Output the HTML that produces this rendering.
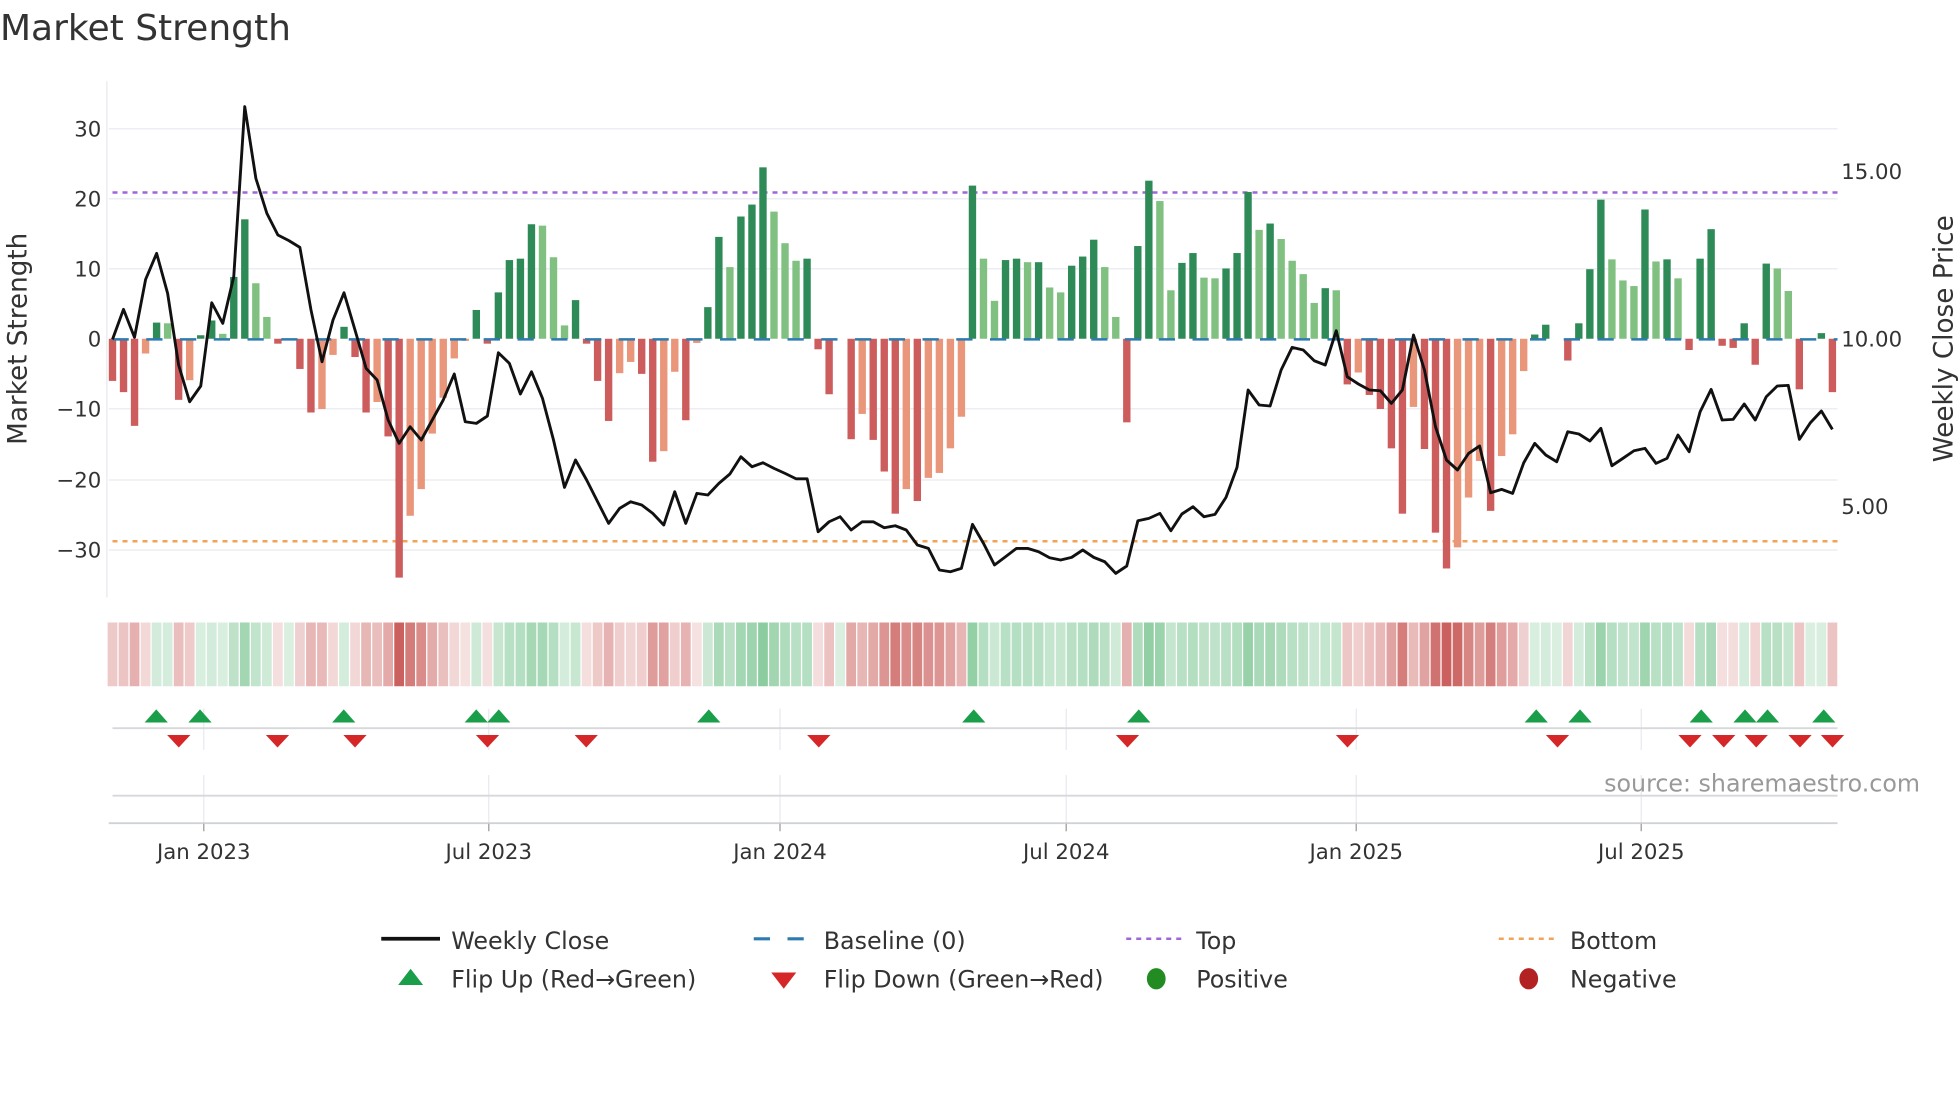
<!DOCTYPE html>
<html><head><meta charset="utf-8"><style>
html,body{margin:0;padding:0;background:#fff;}
svg{display:block;font-family:"DejaVu Sans","Liberation Sans",sans-serif;}
</style></head><body>
<svg id="s" xmlns="http://www.w3.org/2000/svg" width="1960" height="1102" viewBox="0 0 1568 881.6">
<rect width="1568" height="881.6" fill="#fff"/>
<text x="0" y="32" font-size="28.8" fill="#333">Market Strength</text>
<g id="grid" stroke="#eceef4" stroke-width="1.2">
<line x1="87" y1="103" x2="1470" y2="103"/><line x1="87" y1="159" x2="1470" y2="159"/><line x1="87" y1="215" x2="1470" y2="215"/><line x1="87" y1="327" x2="1470" y2="327"/><line x1="87" y1="384" x2="1470" y2="384"/><line x1="87" y1="440" x2="1470" y2="440"/>
</g>
<line x1="85.5" y1="65" x2="85.5" y2="478" stroke="#e6e8ee" stroke-width="1"/>
<g font-size="17" fill="#333" text-anchor="end">
<text x="81" y="109">30</text><text x="81" y="165">20</text><text x="81" y="221">10</text><text x="81" y="277">0</text><text x="81" y="333">−10</text><text x="81" y="390">−20</text><text x="81" y="446">−30</text>
</g>
<g font-size="17" fill="#333">
<text x="1473" y="143">15.00</text><text x="1473" y="277">10.00</text><text x="1473" y="411">5.00</text>
</g>
<text transform="translate(21,271) rotate(-90)" font-size="21" fill="#333" text-anchor="middle">Market Strength</text>
<text transform="translate(1562,271) rotate(-90)" font-size="21" fill="#333" text-anchor="middle">Weekly Close Price</text>
<line x1="90" y1="154" x2="1470" y2="154" stroke="#a066d8" stroke-width="2" stroke-dasharray="4 4"/>
<line x1="90" y1="433" x2="1470" y2="433" stroke="#f0a458" stroke-width="2" stroke-dasharray="4 4"/>
<g id="bars"></g>
<line x1="90" y1="271.5" x2="1470" y2="271.5" stroke="#2e7bb0" stroke-width="2" stroke-dasharray="13 14"/>
<polyline id="price" fill="none" stroke="#111" stroke-width="2.3" stroke-linejoin="round"/>
<g id="strip"></g>
<g stroke="#e8eaf0" stroke-width="1">
<line x1="163" y1="567" x2="163" y2="600"/><line x1="391" y1="567" x2="391" y2="600"/><line x1="624" y1="567" x2="624" y2="600"/><line x1="853" y1="567" x2="853" y2="600"/><line x1="1085" y1="567" x2="1085" y2="600"/><line x1="1313" y1="567" x2="1313" y2="600"/>
<line x1="163" y1="620" x2="163" y2="658"/><line x1="391" y1="620" x2="391" y2="658"/><line x1="624" y1="620" x2="624" y2="658"/><line x1="853" y1="620" x2="853" y2="658"/><line x1="1085" y1="620" x2="1085" y2="658"/><line x1="1313" y1="620" x2="1313" y2="658"/>
</g>
<line x1="90" y1="582.5" x2="1470" y2="582.5" stroke="#d6d8dc" stroke-width="1.5"/>
<line x1="90" y1="636.5" x2="1470" y2="636.5" stroke="#d6d8dc" stroke-width="1.5"/>
<line x1="87" y1="658.5" x2="1470" y2="658.5" stroke="#d0d2d6" stroke-width="1.5"/>
<g stroke="#aaa" stroke-width="1.2">
<line x1="163" y1="659" x2="163" y2="665"/><line x1="391" y1="659" x2="391" y2="665"/><line x1="624" y1="659" x2="624" y2="665"/><line x1="853" y1="659" x2="853" y2="665"/><line x1="1085" y1="659" x2="1085" y2="665"/><line x1="1313" y1="659" x2="1313" y2="665"/>
</g>
<g id="marks"></g>
<text x="1536" y="633" font-size="19" fill="#999" text-anchor="end">source: sharemaestro.com</text>
<g font-size="17" fill="#333" text-anchor="middle">
<text x="163" y="687">Jan 2023</text><text x="391" y="687">Jul 2023</text><text x="624" y="687">Jan 2024</text><text x="853" y="687">Jul 2024</text><text x="1085" y="687">Jan 2025</text><text x="1313" y="687">Jul 2025</text>
</g>
<g font-size="19" fill="#333">
<line x1="305" y1="751" x2="352" y2="751" stroke="#111" stroke-width="3"/>
<text x="361" y="759">Weekly Close</text>
<line x1="603" y1="751" x2="645" y2="751" stroke="#2e7bb0" stroke-width="2.5" stroke-dasharray="13 14"/>
<text x="659" y="759">Baseline (0)</text>
<line x1="901" y1="751" x2="945" y2="751" stroke="#a066d8" stroke-width="2" stroke-dasharray="4 4"/>
<text x="957" y="759">Top</text>
<line x1="1199" y1="751" x2="1243" y2="751" stroke="#f0a458" stroke-width="2" stroke-dasharray="4 4"/>
<text x="1256" y="759">Bottom</text>
<polygon points="318.5,788 338.5,788 328.5,775" fill="#1a9e4a"/>
<text x="361" y="790">Flip Up (Red→Green)</text>
<polygon points="617,778 637,778 627,791" fill="#d62728"/>
<text x="659" y="790">Flip Down (Green→Red)</text>
<ellipse cx="925" cy="783" rx="7.5" ry="8.5" fill="#228b22"/>
<text x="957" y="790">Positive</text>
<ellipse cx="1223" cy="783" rx="7.5" ry="8.5" fill="#b22222"/>
<text x="1256" y="790">Negative</text>
</g>
</svg>
<script>
var V=[-6,-7.6,-12.4,-2.1,2.3,2.2,-8.7,-5.9,0.5,2.6,0.7,8.8,17,7.9,3.1,-0.7,0,-4.3,-10.5,-10,-2.3,1.7,-2.6,-10.5,-9,-13.9,-34,-25.2,-21.4,-13.5,-8.4,-2.8,-0.3,4.1,-0.7,6.6,11.2,11.4,16.3,16.1,
11.6,1.9,5.5,-0.7,-6,-11.7,-4.9,-3.3,-5,-17.5,-16,-4.7,-11.6,-0.6,4.5,14.5,10.2,17.4,19.1,24.4,18.1,13.6,11.1,11.4,-1.5,-7.9,0,-14.3,-10.7,-14.4,-18.9,-24.9,-21.4,-23.1,-19.8,-19.1,-15.6,-11.1,21.8,11.4,
5.4,11.2,11.4,10.9,10.9,7.3,6.6,10.4,11.7,14.1,10.2,3.1,-11.9,13.2,22.5,19.6,6.9,10.8,12.2,8.7,8.6,10,12.2,20.9,15.5,16.4,14.2,11.1,9.2,5.1,7.2,6.9,-6.5,-4.8,-8,-10,-15.6,-24.9,-9.7,-15.7,
-27.6,-32.7,-29.7,-22.6,-17.4,-24.5,-16.7,-13.6,-4.6,0.6,2,0,-3.1,2.2,9.9,19.8,11.3,8.3,7.5,18.4,11,11.3,8.6,-1.6,11.4,15.6,-1,-1.3,2.2,-3.7,10.7,10,6.8,-7.2,0,0.8,-7.6];
var LI=[3,5,7,10,13,14,19,20,24,27,28,29,30,31,32,39,40,41,46,47,50,51,53,56,60,61,62,68,72,74,75,76,77,79,80,83,85,86,90,91,95,96,99,100,104,106,107,108,109,111,113,118,122,123,124,126,127,128,136,137,138,140,142,151,152];
var P=[778,688,772,598,520,640,855,965,918,668,730,590,80,295,400,465,482,502,690,845,720,638,750,865,900,1020,1090,1040,1080,1020,960,882,1025,1030,1008,818,850,942,875,955,
1080,1222,1140,1200,1265,1330,1285,1265,1275,1300,1335,1235,1330,1240,1245,1210,1182,1130,1160,1148,1165,1180,1196,1196,1355,1325,1310,1350,1325,1325,1343,1337,1350,1395,1405,1470,1475,1465,1333,1390,
1455,1430,1405,1405,1415,1433,1440,1432,1410,1432,1445,1480,1458,1322,1315,1300,1352,1302,1280,1310,1303,1252,1162,930,975,978,870,802,810,842,855,752,890,912,930,932,970,930,765,870,
1040,1140,1170,1120,1098,1238,1228,1240,1148,1090,1125,1145,1055,1062,1083,1045,1157,1135,1112,1105,1150,1135,1065,1115,995,928,1020,1018,972,1020,950,918,916,1078,1028,993,1048];
var NS="http://www.w3.org/2000/svg";
function el(t,a,p){var e=document.createElementNS(NS,t);for(var k in a)e.setAttribute(k,a[k]);p.appendChild(e);return e;}
var bars=document.getElementById('bars'),strip=document.getElementById('strip'),marks=document.getElementById('marks');
var pts=[];
for(var i=0;i<V.length;i++){
  var x=90+8.82*i,v=V[i],h=v*5.62,light=LI.indexOf(i)>=0;
  if(v!==0){
    var col=v>0?(light?'#80c080':'#2e8b57'):(light?'#e9967a':'#cd5c5c');
    el('rect',{x:x-2.95,y:v>0?271-h:271,width:5.9,height:Math.abs(h),fill:col},bars);
  }
  pts.push(x.toFixed(1)+','+(64+P[i]*0.2667).toFixed(1));
  var t=Math.min(1,Math.abs(v)/32),fill;
  if(v>=0){var a=0.18+0.5*t;fill='rgba(50,165,85,'+a.toFixed(2)+')';}
  else{var a=0.16+0.72*t;fill='rgba(195,75,72,'+a.toFixed(2)+')';}
  el('rect',{x:x-4.4+0.5,y:498,width:7.8,height:51,fill:fill},strip);
}
document.getElementById('price').setAttribute('points',pts.join(' '));
var up=[125,160,275,381,399,567,779,911,1229,1264,1361,1396,1414,1459];
var dn=[143,222,284,390,469,655,902,1078,1246,1352,1379,1405,1440,1466];
up.forEach(function(x){el('polygon',{points:(x-9.3)+',578 '+(x+9.3)+',578 '+x+',567.5',fill:'#1a9e4a'},marks);});
dn.forEach(function(x){el('polygon',{points:(x-9.3)+',588 '+(x+9.3)+',588 '+x+',598',fill:'#d62728'},marks);});
</script>
</body></html>
